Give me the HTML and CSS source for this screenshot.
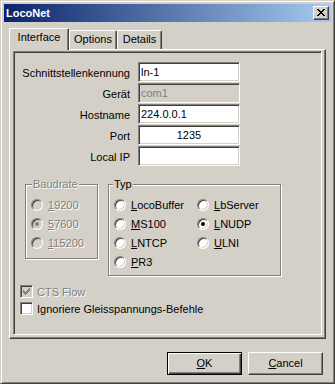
FILE: index.html
```html
<!DOCTYPE html>
<html>
<head>
<meta charset="utf-8">
<title>LocoNet</title>
<link rel="stylesheet" href="styles.css">
</head>
<body>
<div class="window">
  <div class="titlebar">
    <span class="title">LocoNet</span>
    <span class="close">
      <svg width="8" height="7" viewBox="0 0 8 7"><path d="M0 0h2v1H0z M6 0h2v1H6z M1 1h2v1H1z M5 1h2v1H5z M2 2h4v1H2z M3 3h2v1H3z M2 4h4v1H2z M1 5h2v1H1z M5 5h2v1H5z M0 6h2v1H0z M6 6h2v1H6z" fill="#000"/></svg>
    </span>
  </div>
  <div class="body">
    <div class="tabs">
      <div class="tab active">Interface</div>
      <div class="tab tab-options">Options</div>
      <div class="tab tab-details">Details</div>
    </div>
    <div class="pane">
      <div class="panel">
        <div class="form">
          <span class="label">Schnittstellenkennung</span><span class="field">ln-1</span>
          <span class="label">Gerät</span><span class="field disabled">com1</span>
          <span class="label">Hostname</span><span class="field">224.0.0.1</span>
          <span class="label">Port</span><span class="field center">1235</span>
          <span class="label">Local IP</span><span class="field"></span>
        </div>
        <div class="groups">
          <fieldset class="group baud">
            <legend class="dis">Baudrate</legend>
            <div class="radio"><span class="circle off"></span><span class="dis"><u>1</u>9200</span></div>
            <div class="radio"><span class="circle off checked"></span><span class="dis"><u>5</u>7600</span></div>
            <div class="radio"><span class="circle off"></span><span class="dis"><u>1</u>15200</span></div>
          </fieldset>
          <fieldset class="group typ">
            <legend>Typ</legend>
            <div class="typ-grid">
              <div class="radio"><span class="circle"></span><span><u>L</u>ocoBuffer</span></div>
              <div class="radio"><span class="circle"></span><span><u>L</u>bServer</span></div>
              <div class="radio"><span class="circle"></span><span><u>M</u>S100</span></div>
              <div class="radio"><span class="circle checked"></span><span><u>L</u>NUDP</span></div>
              <div class="radio"><span class="circle"></span><span><u>L</u>NTCP</span></div>
              <div class="radio"><span class="circle"></span><span><u>U</u>LNI</span></div>
              <div class="radio"><span class="circle"></span><span><u>P</u>R3</span></div>
            </div>
          </fieldset>
        </div>
        <div class="checks">
          <div class="check"><span class="box off"><svg width="7" height="7" viewBox="0 0 7 7"><path d="M6 0h1v1H6z M5 1h2v1H5z M0 2h1v1H0z M4 2h3v1H4z M0 3h2v1H0z M3 3h3v1H3z M0 4h5v1H0z M1 5h3v1H1z M2 6h1v1H2z" fill="#808080"/></svg></span><span class="dis">CTS Flow</span></div>
          <div class="check"><span class="box"></span><span>Ignoriere Gleisspannungs-Befehle</span></div>
        </div>
      </div>
    </div>
    <div class="buttons">
      <span class="btn default"><u>O</u>K</span>
      <span class="btn"><u>C</u>ancel</span>
    </div>
  </div>
</div>
</body>
</html>
```

FILE: styles.css
```css
* { box-sizing: border-box; }
html, body { margin: 0; padding: 0; }
body {
  background: #d4d0c8;
  font-family: "Liberation Sans", Arial, sans-serif;
  font-size: 11px;
  color: #000;
}
u { text-decoration: underline; text-underline-offset: 1px; }

.window {
  width: 335px;
  height: 384px;
  background: #d4d0c8;
  border: 1px solid;
  border-color: #d4d0c8 #404040 #404040 #d4d0c8;
  box-shadow: inset 1px 1px #fff, inset -1px -1px #808080;
  padding: 3px;
  display: flex;
  flex-direction: column;
}

.titlebar {
  height: 18px;
  flex: none;
  background: linear-gradient(to right, #0a246a, #a6caf0);
  display: flex;
  align-items: center;
  justify-content: space-between;
  padding: 0 2px 0 2px;
}
.title {
  color: #fff;
  font-weight: bold;
  font-size: 11px;
  line-height: 18px;
}
.close {
  width: 16px;
  height: 14px;
  background: #d4d0c8;
  border: 1px solid;
  border-color: #fff #404040 #404040 #fff;
  box-shadow: inset -1px -1px #808080;
  display: flex;
  align-items: center;
  justify-content: center;
  padding: 0 1px 1px 0;
}
.close svg { display: block; }

.body {
  flex: 1;
  display: flex;
  flex-direction: column;
  padding: 6px 5px 5px 5px;
}

.tabs {
  display: flex;
  align-items: flex-end;
  height: 21px;
  flex: none;
}
.tab {
  height: 19px;
  border-top: 1px solid #fff;
  border-left: 1px solid #fff;
  border-right: 1px solid #404040;
  box-shadow: inset -1px 0 #808080;
  border-top-left-radius: 2px;
  border-top-right-radius: 2px;
  text-align: center;
  line-height: 13px;
  padding-top: 2px;
  background: #d4d0c8;
}
.tab.active {
  width: 60px;
  height: 22px;
  margin-bottom: -1px;
  position: relative;
  z-index: 1;
}
.tab-options { width: 48px; }
.tab-details { width: 45px; }

.pane {
  height: 290px;
  flex: none;
  border: 1px solid;
  border-color: #fff #404040 #404040 #fff;
  box-shadow: inset -1px -1px #808080;
  padding: 1px 3px 3px 3px;
  display: flex;
}
.panel {
  flex: 1;
  border: 1px solid;
  border-color: #808080 #fff #fff #808080;
  box-shadow: inset 1px 1px #404040, inset -1px -1px #d4d0c8;
  padding: 10px 0 0 1px;
  display: flex;
  flex-direction: column;
}

.form {
  display: grid;
  grid-template-columns: 115px 102px;
  grid-auto-rows: 20px;
  column-gap: 8px;
  row-gap: 1px;
  align-items: center;
}
.label { text-align: right; line-height: 20px; padding-top: 1px; }
.field {
  height: 20px;
  background: #fff;
  border: 1px solid;
  border-color: #808080 #fff #fff #808080;
  box-shadow: inset 1px 1px #404040, inset -1px -1px #d4d0c8;
  padding: 1px 2px;
  line-height: 16px;
  white-space: nowrap;
}
.field.disabled { background: #d4d0c8; color: #808080; }
.field.center { text-align: center; }

.groups {
  display: flex;
  align-items: flex-start;
  gap: 10px;
  margin: 12px 0 0 10px;
}
.group {
  margin: 0;
  border: 1px solid #808080;
  box-shadow: inset 1px 1px #fff, 1px 1px #fff;
  padding: 4px 4px 6px 5px;
  min-width: 0;
}
.group legend {
  padding: 0 1px;
  line-height: 13px;
  background: #d4d0c8;
}
.baud { width: 73px; }
.baud legend { margin-left: 1px; }
.typ { width: 173px; padding-bottom: 4px; }
.typ legend { margin-left: -1px; }
.typ-grid {
  display: grid;
  grid-template-columns: 83px auto;
}

.radio {
  height: 19px;
  display: flex;
  align-items: center;
  gap: 5px;
  white-space: nowrap;
}
.circle {
  width: 12px;
  height: 12px;
  flex: none;
  border-radius: 50%;
  border: 1px solid;
  border-color: #808080 #fff #fff #808080;
  box-shadow: inset 1px 1px #404040, inset -1px -1px #d4d0c8;
  background: #fff;
  display: flex;
  align-items: center;
  justify-content: center;
}
.circle.off { background: #d4d0c8; }
.circle.checked::after {
  content: "";
  width: 4px;
  height: 4px;
  border-radius: 50%;
  background: #000;
}
.circle.off.checked::after { background: #808080; }

.dis { color: #808080; text-shadow: 1px 1px #fff; }

.checks {
  margin: 7px 0 0 5px;
}
.check {
  height: 17px;
  display: flex;
  align-items: center;
  gap: 4px;
}
.box {
  width: 13px;
  height: 13px;
  flex: none;
  background: #fff;
  border: 1px solid;
  border-color: #808080 #fff #fff #808080;
  box-shadow: inset 1px 1px #404040, inset -1px -1px #d4d0c8;
  display: flex;
  align-items: center;
  justify-content: center;
}
.box.off { background: #d4d0c8; }
.box svg { display: block; }

.buttons {
  display: flex;
  justify-content: flex-end;
  gap: 6px;
  margin-top: 13px;
  padding-right: 3px;
}
.btn {
  width: 75px;
  height: 23px;
  border: 1px solid;
  border-color: #fff #404040 #404040 #fff;
  box-shadow: inset -1px -1px #808080;
  display: flex;
  align-items: center;
  justify-content: center;
  padding-bottom: 1px;
}
.btn.default {
  border-color: #000;
  box-shadow: inset 1px 1px #fff, inset -1px -1px #404040, inset -2px -2px #808080;
}
```
